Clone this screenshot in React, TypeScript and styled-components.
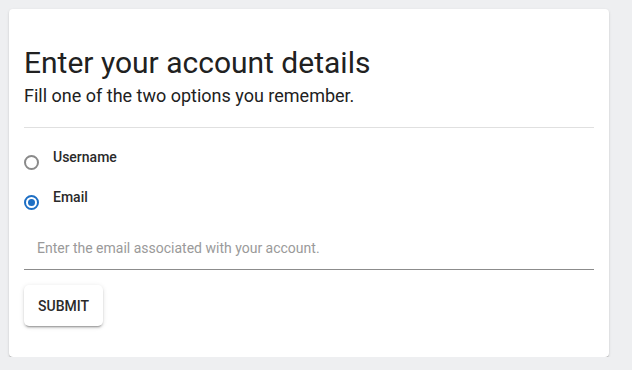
import React, { useState } from "react";
import styled, { createGlobalStyle } from "styled-components";

const Global = createGlobalStyle`
  html, body { margin: 0; padding: 0; background: #eeeff1; }
  body { font-family: Roboto, "Noto Sans", sans-serif; color: #212121; }
  #root { padding: 9px 23px 0 9px; }
`;

const Card = styled.div`
  background: #fff;
  border-radius: 4px;
  box-shadow: 0 2px 1px -1px rgba(0,0,0,0.2), 0 1px 1px 0 rgba(0,0,0,0.14), 0 1px 3px 0 rgba(0,0,0,0.12);
  padding: 36px 15px 31px 15px;
  width: 600px;
  box-sizing: border-box;
`;

const Title = styled.h1`
  margin: 0;
  font-size: 30px;
  font-weight: 400;
  line-height: 36px;
  letter-spacing: 0;
  color: #212121;
`;

const Subtitle = styled.p`
  margin: 3px 0 0;
  font-size: 18px;
  line-height: 24px;
  color: #212121;
`;

const Divider = styled.hr`
  border: none;
  border-top: 1px solid #e0e0e0;
  margin: 19px 0 0;
`;

const Options = styled.div`
  display: flex;
  flex-direction: column;
  gap: 10px;
  margin-top: 21px;
`;

const Option = styled.label`
  display: flex;
  align-items: flex-start;
  gap: 14px;
  cursor: pointer;
  height: 30px;
`;

const RadioCircle = styled.span<{ $checked: boolean }>`
  width: 15px;
  height: 15px;
  border-radius: 50%;
  border: 2px solid ${p => (p.$checked ? "#1e6fc4" : "#8a8a8a")};
  box-sizing: border-box;
  margin-top: 6px;
  display: flex;
  align-items: center;
  justify-content: center;
  flex: none;
  &::after {
    content: "";
    width: 7px;
    height: 7px;
    border-radius: 50%;
    background: ${p => (p.$checked ? "#1e6fc4" : "transparent")};
  }
`;

const OptionText = styled.span`
  font-size: 14px;
  font-weight: 500;
  line-height: 16px;
  color: #2a2a2a;
`;

const Field = styled.div`
  margin-top: 7px;
  border-bottom: 1px solid #8c8c8c;
  padding: 12px 13px 11px;
`;

const Input = styled.input`
  border: none;
  outline: none;
  width: 100%;
  font-family: Roboto, sans-serif;
  font-size: 14px;
  line-height: 20px;
  padding: 0;
  color: #212121;
  background: transparent;
  &::placeholder { color: #9a9a9a; }
`;

const Button = styled.button`
  margin-top: 15px;
  height: 41px;
  padding: 0 14px;
  border: none;
  border-radius: 5px;
  background: #fff;
  font-family: Roboto, sans-serif;
  font-size: 14px;
  font-weight: 500;
  color: #2a2a2a;
  box-shadow: 0 3px 1px -2px rgba(0,0,0,0.2), 0 2px 2px 0 rgba(0,0,0,0.14), 0 1px 5px 0 rgba(0,0,0,0.12);
  cursor: pointer;
`;

export default function App() {
  const [choice, setChoice] = useState<"username" | "email">("email");
  return (
    <>
      <Global />
      <Card>
        <Title>Enter your account details</Title>
        <Subtitle>Fill one of the two options you remember.</Subtitle>
        <Divider />
        <Options>
          <Option onClick={() => setChoice("username")}>
            <RadioCircle $checked={choice === "username"} />
            <OptionText>Username</OptionText>
          </Option>
          <Option onClick={() => setChoice("email")}>
            <RadioCircle $checked={choice === "email"} />
            <OptionText>Email</OptionText>
          </Option>
        </Options>
        <Field>
          <Input placeholder="Enter the email associated with your account." />
        </Field>
        <Button>SUBMIT</Button>
      </Card>
    </>
  );
}
